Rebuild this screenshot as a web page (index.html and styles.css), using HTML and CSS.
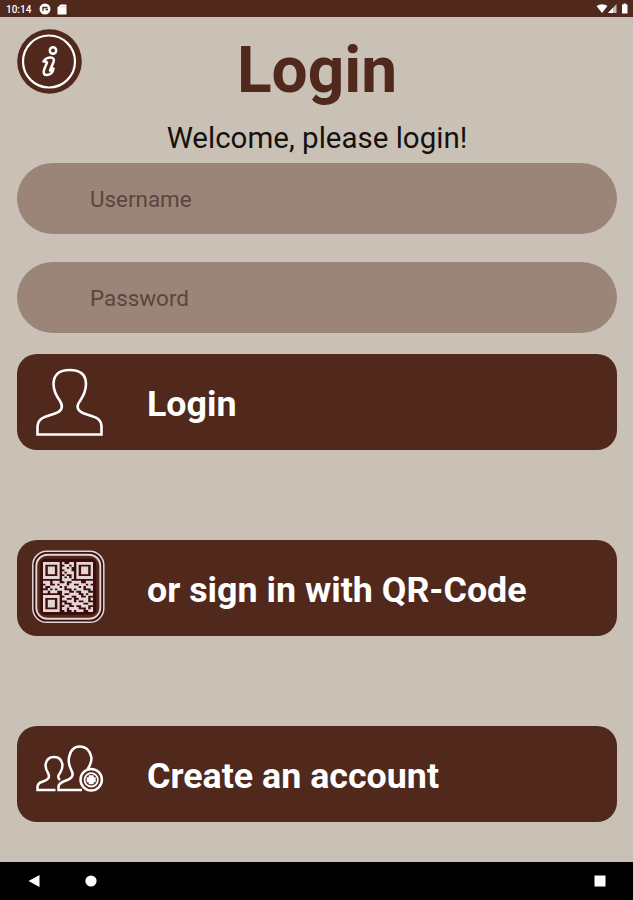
FILE: index.html
```html
<!DOCTYPE html>
<html lang="en">
<head>
  <meta charset="UTF-8">
  <meta name="viewport" content="width=device-width, initial-scale=1.0">
  <title>Login</title>
  <link rel="stylesheet" href="styles.css">
</head>
<body>
  <div class="status-bar">
    <span class="time">10:14</span>
    <svg class="status-app" viewBox="0 0 12 12">
      <circle cx="6" cy="6" r="5.500" fill="#fff"/>
      <path d="M4 8V4.500H8.500M6.500 6.500H9" fill="none" stroke="#50281c" stroke-width="1.300"/>
    </svg>
    <svg class="status-card" viewBox="0 0 10 11">
      <path d="M3.500 0.500H9Q9.500 0.500 9.500 1V10Q9.500 10.500 9 10.500H1Q0.500 10.500 0.500 10V3.500Z" fill="#fff"/>
      <path d="M4 2V3.500M6 2V3.500M8 2V3.500" stroke="#b79d92" stroke-width="0.700"/>
    </svg>
    <svg class="status-right" viewBox="0 0 34 12">
      <path d="M0.500 3Q6 -0.500 11.500 3L6 10Z" fill="#fff"/>
      <path d="M12 10L20.500 1V10Z" fill="#c9b9b1"/>
      <path d="M12 10L17 4.800V10Z" fill="#fff"/>
      <path d="M26 1.500H27.500V0.500H30V1.500H31.500V10.500H26Z" fill="#fff"/>
    </svg>
  </div>

  <div class="container">
    <div class="header">
      <svg class="info" viewBox="0 0 65 65">
        <circle cx="32.500" cy="32.500" r="32.300" fill="#50281c"/>
        <circle cx="32" cy="32.500" r="26" fill="none" stroke="#fff" stroke-width="2.200"/>
        <g fill="none" stroke="#fff" stroke-width="2.500" stroke-linejoin="round">
          <circle cx="36" cy="21.500" r="3.200"/>
          <path d="M26.500 32.500Q29 28.500 33.500 28.500Q38 28.500 36.500 33L33 41.500Q34.500 42 36.500 39.500Q35.500 45.500 30 46Q25.500 46 27 41L30 33.500Q29 32 26.500 32.500Z"/>
        </g>
      </svg>
      <h1>Login</h1>
    </div>
    <p class="welcome">Welcome, please login!</p>

    <input type="text" placeholder="Username">
    <input type="password" placeholder="Password">

    <button class="login">
      <svg viewBox="0 0 76 76">
        <path d="M6.500 70.500V62Q7 55 15 52.500L24 49.500C32 47 32 42 29 37Q22.500 28 22.500 20C22.500 10 29 6 38.500 6S55 10 55 20Q55 28 49 37C45 42 46 47 53 49.500L62 52.500Q70.500 55 70.500 62V70.500Z" fill="none" stroke="#fff" stroke-width="2.600"/>
      </svg>
      <span>Login</span>
    </button>

    <button>
      <svg viewBox="0 0 76 76">
        <rect x="1.800" y="1.300" width="71" height="71" rx="14" fill="#3c0d0a" stroke="#e2d6d6" stroke-width="1.500"/>
        <rect x="5.300" y="4.800" width="64" height="64" rx="11" fill="#50281c" stroke="#e2d6d6" stroke-width="1.900"/>
        <rect x="9.300" y="8.800" width="56" height="56" rx="5" fill="#3c0d0a"/>
        <!-- QR modules, one unit each -->
        <svg x="12" y="12" width="50" height="50" viewBox="0 0 21 21">
          <path d="M0 .5h7M8 .5h1M11 .5h2M14 .5h7M0 1.500h1M6 1.500h1M9 1.500h2M12 1.500h1M14 1.500h1M20 1.500h1M0 2.500h1M2 2.500h3M6 2.500h1M8 2.500h2M11 2.500h1M14 2.500h1M16 2.500h3M20 2.500h1M0 3.500h1M2 3.500h3M6 3.500h1M9 3.500h3M14 3.500h1M16 3.500h3M20 3.500h1M0 4.500h1M2 4.500h3M6 4.500h1M8 4.500h1M10 4.500h3M14 4.500h1M16 4.500h3M20 4.500h1M0 5.500h1M6 5.500h1M9 5.500h1M12 5.500h1M14 5.500h1M20 5.500h1M0 6.500h7M8 6.500h1M10 6.500h1M12 6.500h1M14 6.500h7M8 7.500h4M0 8.500h3M4 8.500h3M9 8.500h1M12 8.500h4M18 8.500h3M1 9.500h2M5 9.500h1M7 9.500h3M11 9.500h2M15 9.500h3M19 9.500h1M0 10.500h1M3 10.500h4M8 10.500h1M10 10.500h5M16 10.500h1M18 10.500h3M2 11.500h1M4 11.500h1M6 11.500h3M12 11.500h1M14 11.500h3M20 11.500h1M0 12.500h2M3 12.500h3M8 12.500h3M13 12.500h1M16 12.500h3M8 13.500h1M11 13.500h4M17 13.500h1M19 13.500h2M0 14.500h7M9 14.500h3M14 14.500h2M18 14.500h1M0 15.500h1M6 15.500h1M8 15.500h2M12 15.500h1M15 15.500h4M20 15.500h1M0 16.500h1M2 16.500h3M6 16.500h1M10 16.500h3M14 16.500h1M17 16.500h2M0 17.500h1M2 17.500h3M6 17.500h1M8 17.500h1M12 17.500h5M19 17.500h2M0 18.500h1M2 18.500h3M6 18.500h1M9 18.500h2M13 18.500h1M16 18.500h3M0 19.500h1M6 19.500h1M8 19.500h2M11 19.500h4M18 19.500h1M20 19.500h1M0 20.500h7M9 20.500h1M12 20.500h1M14 20.500h3M19 20.500h2" stroke="#e2d6d6" stroke-width="1.250"/>
        </svg>
      </svg>
      <span>or sign in with QR-Code</span>
    </button>

    <button>
      <svg viewBox="0 0 76 76">
        <g fill="none" stroke="#fff" stroke-width="2.500">
          <path d="M24.500 54H6.500V51Q6.500 47 12 45.500C18 43.500 19 41 17 37Q14.500 33 14.500 29Q15.500 21 23 21T31.500 29Q31.500 33 29 37C26.500 40 27 42.500 29 44"/>
          <path d="M51 54H27.500V51Q27.500 47 35 44.500C42 42 43 38.500 40 33.500Q37 27.500 38 21.500Q40 10.500 49 10.500T60.500 21.500Q60.500 27.500 56.500 33.500"/>
          <circle cx="60.200" cy="43.800" r="10.700"/>
          <circle cx="60.200" cy="43.800" r="6.700" stroke-width="1.800"/>
        </g>
        <path d="M60.200 39.300V48.300M55.700 43.800H64.700" stroke="#fff" stroke-width="5"/>
      </svg>
      <span>Create an account</span>
    </button>
  </div>

  <div class="nav-bar">
    <svg class="back" viewBox="0 0 12 12"><path d="M0.500 6L11.500 0V12Z"/></svg>
    <svg class="home" viewBox="0 0 12 12"><circle cx="6" cy="6" r="5.600"/></svg>
    <svg class="recent" viewBox="0 0 12 12"><rect x="0.500" y="0.500" width="11" height="11" rx="0.500"/></svg>
  </div>
</body>
</html>
```
FILE: styles.css
```css
* {
  margin: 0;
  padding: 0;
  box-sizing: border-box;
  font-family: Roboto, sans-serif;
}
body {
  background-color: #cac1b6;
  height: 900px;
  display: flex;
  flex-direction: column;
  overflow: hidden;
}
svg {
  display: block;
  flex-shrink: 0;
}
.status-bar {
  height: 17px;
  flex-shrink: 0;
  background-color: #50281c;
  display: flex;
  align-items: center;
  padding: 1px 3px 0 6px;
}
.time {
  color: #fff;
  font-size: 10px;
  font-weight: 500;
  width: 33px;
}
.status-app {
  width: 12px;
  height: 12px;
  margin-right: 6px;
}
.status-card {
  width: 10px;
  height: 11px;
}
.status-right {
  width: 34px;
  height: 12px;
  margin-left: auto;
}
.container {
  flex: 1;
  min-height: 0;
  padding: 12px 16px 0 17px;
}
.header {
  height: 104px;
  display: grid;
  grid-template-columns: 65px 1fr 65px;
}
.info {
  width: 65px;
  height: 65px;
}
h1 {
  color: #50281c;
  font-size: 64px;
  line-height: 84px;
  text-align: center;
}
.welcome {
  font-size: 29.500px;
  line-height: 30px;
  height: 40px;
  margin-top: -10px;
  text-align: center;
  color: #15110f;
}
input {
  display: block;
  width: 100%;
  height: 71px;
  margin-bottom: 28px;
  padding: 1px 73px 0;
  border: none;
  border-radius: 36px;
  background-color: #9b8478;
  font-size: 22.400px;
}
input::placeholder {
  color: #5a463e;
}
input[type="password"] {
  margin-bottom: 21px;
}
button {
  display: flex;
  align-items: center;
  width: 100%;
  height: 96px;
  margin-bottom: 90px;
  padding: 0 14px;
  border: none;
  border-radius: 20px;
  background-color: #50281c;
  color: #fff;
  font-size: 35.800px;
  font-weight: 700;
}
button > svg {
  width: 76px;
  height: 76px;
  margin-right: 40px;
}
button span {
  padding-top: 4px;
}
.nav-bar {
  height: 38px;
  flex-shrink: 0;
  background-color: #000;
  display: flex;
  align-items: center;
  padding: 0 27px 0 28px;
}
.nav-bar svg {
  width: 12px;
  height: 12px;
  fill: #fff;
}
.home {
  margin-left: 45px;
}
.recent {
  margin-left: auto;
}
```
